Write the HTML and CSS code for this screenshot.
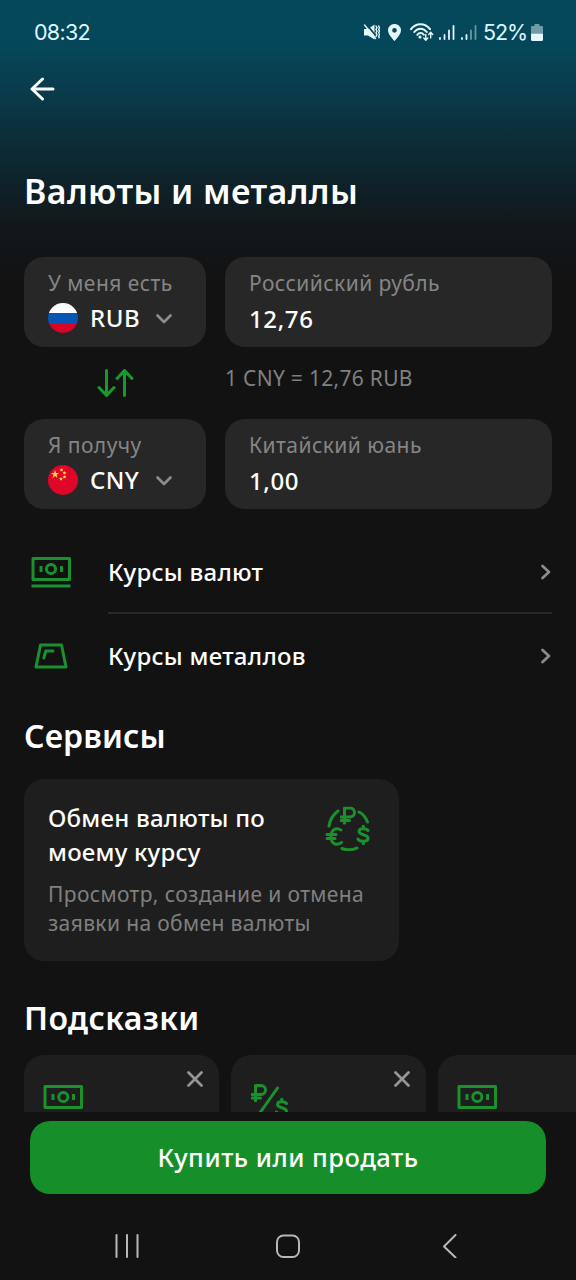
FILE: index.html
```html
<!DOCTYPE html>
<html lang="ru">
<head>
<meta charset="utf-8">
<title>Валюты и металлы</title>
<link rel="stylesheet" href="styles.css">
</head>
<body>
<svg class="defs" aria-hidden="true">
  <symbol id="note" viewBox="0 0 40 24"><path d="M2 1.500h36.500v21H2z"/><circle cx="20.300" cy="12" r="4.600"/><path stroke-linecap="butt" d="M10 9v6M30.500 9v6"/></symbol>
  <symbol id="down" viewBox="0 0 16 10"><path d="M1.500 1.500 8 8l6.500-6.500"/></symbol>
  <symbol id="right" viewBox="0 0 12 16"><path d="m2.500 2 6.500 6-6.500 6"/></symbol>
  <symbol id="close" viewBox="0 0 16 16"><path d="m1.500 1.500 13 13m0-13-13 13"/></symbol>
  <symbol id="ruble" viewBox="0 0 16 18"><path d="M4.500 17V1.500h5.500a4.500 4.500 0 0 1 0 9H1M1 14h8.500"/></symbol>
  <symbol id="dollar" viewBox="0 0 14 20"><path d="M12 5.500C10.500 3.500 3 2.500 3 6.500c0 4 9 2.500 9 6.800 0 4.200-8 3.700-10 .8M7.300 1v2.500M7.300 16.500V19"/></symbol>
</svg>
<div class="screen">
  <header class="status">
    <span class="clock">08:32</span>
    <div class="indicators">
      <svg class="mute" width="16" height="16" viewBox="0 0 16 16"><path class="fill" d="M0 5h4l6.500-4.500v15L4 11.500H0z"/><path class="cut" d="m2.500.5 10 12"/><path class="thin" d="m.5 1 11 13.500"/><path class="thin" d="m12 2 1 1.700-1 1.700 1 1.700-1 1.700 1 1.700-1 2M14.700 2l.8 1.700-.8 1.700.8 1.700-.8 1.700.8 1.700-.8 1.700.5 1.500"/></svg>
      <svg class="pin" width="13" height="17" viewBox="0 0 13 17"><path class="fill" fill-rule="evenodd" d="M6.500 0A6.300 6.300 0 0 0 0 6.300C0 11 6.500 17 6.500 17S13 11 13 6.300A6.300 6.300 0 0 0 6.500 0m0 4a2.300 2.300 0 1 1 0 4.700 2.300 2.300 0 0 1 0-4.700"/></svg>
      <svg class="wifi" width="24" height="18" viewBox="0 0 24 18"><path class="arc" d="M1 6.200C6-.5 15-.5 20 6.200M4.300 9C7.500 4.500 13.500 4.500 16.800 9M7.300 11.800c1.800-2.500 4.800-2.500 6.500 0"/><circle class="fill" cx="10" cy="14" r="1.600"/><path class="thin" d="M15.800 11.500v5.500m-2-2 2 2.200 2-2.200M20.700 15v-5.500m-2 2 2-2.200 2 2.200"/></svg>
      <svg class="signal" width="16" height="16" viewBox="0 0 16 16"><path d="M1 14v1M5.500 11v4M10 6.500V15M14.500 2v13"/></svg>
      <svg class="signal weak" width="16" height="16" viewBox="0 0 16 16"><path d="M1 14v1M5.500 11v4"/><path class="dim" d="M10 6.500V15M14.500 2v13"/></svg>
      <span class="percent">52%</span>
      <svg width="12" height="17" viewBox="0 0 12 17"><path class="empty" d="M3.500 0h5v2H11a1 1 0 0 1 1 1v6.500H0V3a1 1 0 0 1 1-1h2.500z"/><path class="fill" d="M0 9.500h12V15.500a1.500 1.500 0 0 1-1.500 1.500h-9A1.500 1.500 0 0 1 0 15.500z"/></svg>
    </div>
  </header>
  <nav class="toolbar"><svg width="25" height="24" viewBox="0 0 25 24"><path d="M23 12H2M12.500 2 2 12l10.500 10"/></svg></nav>

  <main class="content">
    <h1 class="title">Валюты и металлы</h1>
    <section class="exchange">
      <div class="field">
        <span class="label">У меня есть</span>
        <div class="currency">
          <svg class="flag" viewBox="0 0 30 30"><clipPath id="round"><circle cx="15" cy="15" r="15"/></clipPath><g clip-path="url(#round)"><path fill="#fff" d="M0 0h30v10H0z"/><path fill="#0756b4" d="M0 10h30v10H0z"/><path fill="#d80425" d="M0 20h30v10H0z"/></g></svg>
          <span class="code">RUB</span><svg class="chevron"><use href="#down"/></svg>
        </div>
      </div>
      <div class="field"><span class="label">Российский рубль</span><span class="amount">12,76</span></div>
      <div class="swap"><svg width="38" height="28" viewBox="0 0 38 28"><path d="M10.500 1.500v25M3 18.500l7.500 8 7.500-8M28.500 26.500v-25M21 9.500l7.500-8 7.500 8"/></svg></div>
      <div class="rate">1 CNY = 12,76 RUB</div>
      <div class="field">
        <span class="label">Я получу</span>
        <div class="currency">
          <svg class="flag" viewBox="0 0 30 30"><circle cx="15" cy="15" r="15" fill="#df0628"/><g fill="#ffda44"><path d="m7 5 1 3h3L8.600 9.900l.9 3L7 11l-2.500 1.900.9-3L3 8h3z"/><path d="m13.500 3 .6 1.200 1.400.1-1 1 .2 1.300-1.200-.6-1.200.6.2-1.300-1-1 1.400-.1zM16.500 6l.6 1.200 1.400.1-1 1 .2 1.300-1.200-.6-1.200.6.2-1.300-1-1 1.400-.1zM16.500 10l.6 1.200 1.400.1-1 1 .2 1.300-1.200-.6-1.200.6.2-1.300-1-1 1.400-.1zM13 12l.6 1.200 1.400.1-1 1 .2 1.300-1.200-.6-1.200.6.2-1.300-1-1 1.400-.1z"/></g></svg>
          <span class="code">CNY</span><svg class="chevron"><use href="#down"/></svg>
        </div>
      </div>
      <div class="field"><span class="label">Китайский юань</span><span class="amount">1,00</span></div>
    </section>

    <section class="links">
      <a class="link">
        <svg class="line-icon" width="40" height="31" viewBox="0 0 40 31"><path d="M2 1.500h36.500v21H2z"/><circle cx="20" cy="12" r="4.600"/><path stroke-linecap="butt" d="M10 9v6M30.500 9v6M.5 29h39"/></svg>
        <span class="link-text">Курсы валют</span><svg class="go"><use href="#right"/></svg>
      </a>
      <a class="link">
        <svg class="line-icon" width="40" height="26" viewBox="0 0 40 26"><path d="M9.500 2h21l4.500 22H5zM12.800 15l2-7H22"/></svg>
        <span class="link-text">Курсы металлов</span><svg class="go"><use href="#right"/></svg>
      </a>
    </section>

    <h2 class="heading services">Сервисы</h2>
    <article class="service">
      <div class="service-head">
        <h3 class="service-title">Обмен валюты по<br>моему курсу</h3>
        <svg class="line-icon orbit" width="46" height="46" viewBox="0 0 46 46"><path d="M4 21C5 14 9 9 13 6M34 7c4 2 7 6 8.500 10M17 43.500c5 1.800 10 1.800 15-.5"/><use href="#ruble" x="15" y="1.500" width="16" height="18"/><use href="#dollar" x="31" y="20" width="14" height="20"/><path d="M16 25c-5-3-10-.5-10 6.500s5 10 10.500 6M2 29.500h9M2 33.500h8"/></svg>
      </div>
      <p class="service-text">Просмотр, создание и отмена<br>заявки на обмен валюты</p>
    </article>

    <h2 class="heading tips-heading">Подсказки</h2>
    <section class="tips">
      <div class="tip"><svg class="note"><use href="#note"/></svg><svg class="close"><use href="#close"/></svg></div>
      <div class="tip"><svg class="line-icon pair" width="40" height="36" viewBox="0 0 40 36"><use href="#ruble" x="1" y="1" width="16" height="18"/><path d="M27.500 5 7 34"/><use href="#dollar" x="24.500" y="15" width="14" height="20"/></svg><svg class="close"><use href="#close"/></svg></div>
      <div class="tip"><svg class="note"><use href="#note"/></svg></div>
    </section>
  </main>
  <footer class="footer">
    <button class="trade">Купить или продать</button>
    <nav class="system">
      <svg width="24" height="24" viewBox="0 0 24 24"><path d="M1.500 1v22M12 1v22M22.500 1v22"/></svg>
      <svg width="24" height="24" viewBox="0 0 24 24"><rect x="1" y="1.500" width="22" height="21.500" rx="6.500"/></svg>
      <svg width="24" height="24" viewBox="0 0 24 24"><path d="M18.500 1 7 12.500 18.500 23.500"/></svg>
    </nav>
  </footer>
</div>
</body>
</html>
```

FILE: styles.css
```css
* { box-sizing: border-box; }
body { margin: 0; background: #121212; color: #fff; font-family: "Noto Sans", sans-serif; }
h1, h2, h3, p { margin: 0; }
svg { display: block; flex: none; fill: none; stroke-linecap: round; stroke-linejoin: round; }
.defs { position: absolute; width: 0; height: 0; }
.screen { display: flex; flex-direction: column; width: 576px; height: 1280px; overflow: hidden; background: linear-gradient(#05485c 0, #05475a 45px, #093d4d 85px, #0b303b 130px, #0e242b 175px, #11191d 220px, #121416 255px, #121212 285px); }

.status { display: flex; justify-content: space-between; height: 64px; padding: 0 33.500px 0 34px; align-items: center; font-family: Inter, sans-serif; color: #dff8ff; }
.clock { font-size: 21.5px; letter-spacing: -.7px; }
.indicators { display: flex; align-items: center; }
.indicators svg { stroke: none; }
.indicators .fill { fill: #e4f8fd; }
.indicators .thin { stroke: #e4f8fd; stroke-width: 1.400; }
.indicators .cut { stroke: #05475a; stroke-width: 1.800; }
.indicators .arc { stroke: #e4f8fd; stroke-width: 2; }
.indicators .empty { fill: #719ba5; }
.pin { margin: 0 9px 0 8px; }
.indicators .signal { margin-left: 5px; stroke: #e4f8fd; stroke-width: 1.800; }
.indicators .weak { margin: 0 6px; }
.dim { opacity: .45; }
.percent { margin-right: 3.500px; font-size: 21.5px; letter-spacing: -1.1px; }

.toolbar { height: 104px; padding: 13px 0 0 30px; stroke: #fff; stroke-width: 3; }
.content { height: 944px; overflow: hidden; padding-left: 24px; flex: none; }
.title { height: 45px; padding-top: 1px; font-size: 34px; line-height: 44px; font-weight: 600; letter-spacing: .42px; }
.exchange { display: grid; grid-template-columns: 182px 327px; grid-template-rows: 90px 72px 90px; column-gap: 19px; margin-top: 44px; }
.field { padding: 12px 24px 0; border-radius: 20px; background: #272727; }
.label { display: block; height: 28px; font-size: 21px; line-height: 28px; letter-spacing: .45px; color: #858585; white-space: nowrap; }
.currency { display: flex; align-items: center; height: 40px; }
.flag { width: 30px; height: 30px; margin-top: 1px; }
.code { width: 78px; padding: 2px 0 0 12px; font-size: 24px; line-height: 40px; font-weight: 500; letter-spacing: .5px; }
.chevron { width: 16px; height: 10px; margin-top: 3px; stroke: #8c8c8c; stroke-width: 2.700; }
.amount { display: block; font-size: 24px; line-height: 44px; font-weight: 500; letter-spacing: .6px; }
.swap { padding: 22px 0 0 72px; stroke: #169a2d; stroke-width: 3; }
.rate { font-size: 21px; line-height: 28px; padding-top: 17px; letter-spacing: .3px; color: #808080; }

.links { padding: 21px 24px 0 0; }
.link { display: flex; align-items: center; height: 84px; }
.line-icon { stroke: #1a912d; stroke-width: 3; }
.link .line-icon { margin-left: 7px; }
.link-text { flex: 1; padding: 0 0 1px 37px; font-size: 24px; line-height: 34px; font-weight: 500; letter-spacing: .27px; }
.link:first-child { background: linear-gradient(#292929, #292929) 84px 100% / 444px 2px no-repeat; }
.go { width: 12px; height: 16px; stroke: #8c8c8c; stroke-width: 2.700; }
.heading { font-size: 32px; line-height: 42px; font-weight: 600; }
.services { margin-top: 17px; letter-spacing: .1px; }
.service { width: 375px; height: 182px; margin-top: 22px; padding: 22px 24px; border-radius: 20px; background: #1e1e1e; }
.service-head { display: flex; justify-content: space-between; height: 79px; }
.service-title { font-size: 24px; line-height: 34px; font-weight: 500; letter-spacing: .23px; white-space: nowrap; }
.orbit { margin: 4px 4px 0 0; }
.service-text { font-size: 21px; line-height: 29px; letter-spacing: .37px; color: #808080; white-space: nowrap; }
.tips-heading { margin-top: 36px; letter-spacing: .4px; }
.tips { display: flex; gap: 12px; width: 700px; margin-top: 16px; }
.tip { display: flex; flex: none; justify-content: space-between; width: 195px; height: 150px; padding: 16px 16px 0 19px; border-radius: 20px; background: #1e1e1e; }
.note { width: 40px; height: 24px; margin-top: 14px; stroke: #1a912d; stroke-width: 3; }
.close { width: 16px; height: 16px; stroke: #969696; stroke-width: 2.700; }
.pair { margin-top: 12px; }

.footer { height: 168px; padding: 8.500px 30px 0; background: #121212; }
.trade { display: block; width: 516px; height: 73px; padding: 0; border: 0; border-radius: 20px; background: #168f2a; color: #fff; font: 500 25.500px/34px "Noto Sans", sans-serif; letter-spacing: .5px; }
.system { display: flex; justify-content: space-between; padding: 40.500px 85px 0; stroke: #b8b8b8; stroke-width: 2; }
```
